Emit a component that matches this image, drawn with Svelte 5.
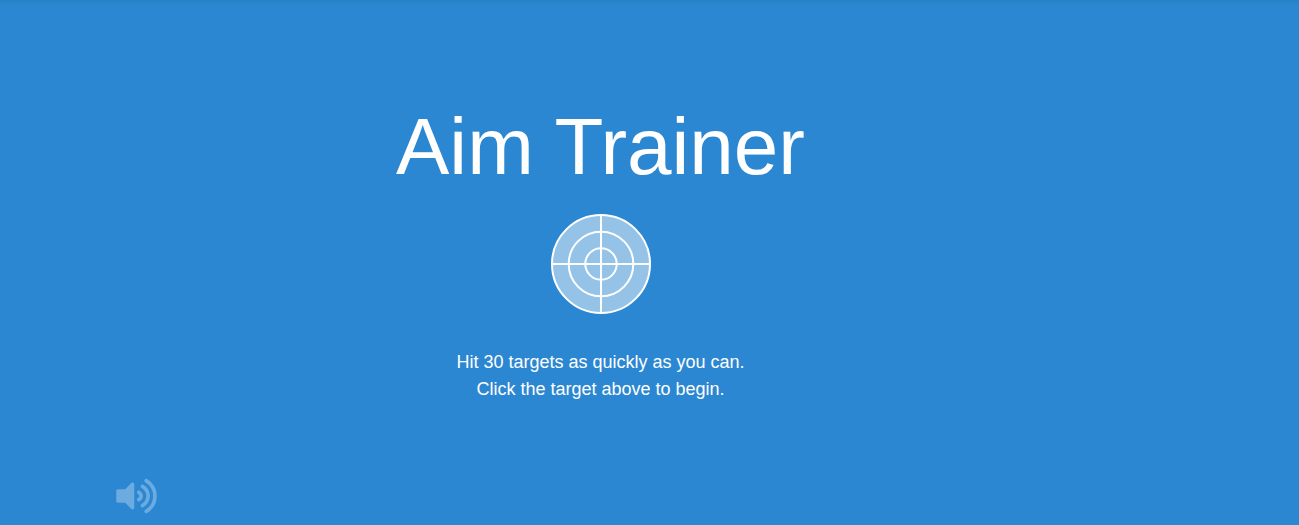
<script>
  let { total = 30 } = $props();
  let muted = $state(false);
</script>

<main>
  <div class="content">
    <h1>Aim Trainer</h1>
    <button class="target" type="button" aria-label="Start">
      <svg width="100" height="100" viewBox="0 0 100 100" fill="none" stroke="#fff" stroke-width="2">
        <circle cx="50" cy="50" r="49" fill="#fff" fill-opacity="0.5" />
        <circle cx="50" cy="50" r="32.3" />
        <circle cx="50" cy="50" r="15.7" />
        <path d="M50 0V100M0 50H100" />
      </svg>
    </button>
    <p>Hit {total} targets as quickly as you can.<br />Click the target above to begin.</p>
    <button
      class="sound"
      type="button"
      aria-label="Sound"
      aria-pressed={!muted}
      onclick={() => (muted = !muted)}
    >
      <svg width="41" height="36" viewBox="0 0 576 512">
        <path
          fill="#fff"
          d="M256 88v336c0 21.400-25.900 32-41 17L126 352H24c-13.300 0-24-10.700-24-24V184c0-13.300 10.700-24 24-24h102l89-89c15-15 41-4.500 41 17z"
        />
        <g fill="none" stroke="#fff" stroke-width="52" stroke-linecap="round">
          <path d="M320 203C364 226 364 286 320 309" />
          <path d="M372 120C480 183 480 329 372 392" />
          <path d="M426 37C592 141 592 371 426 475" />
        </g>
      </svg>
    </button>
  </div>
</main>

<style>
  :global(body) {
    margin: 0;
    background: #2b87d1;
  }

  main {
    box-sizing: border-box;
    min-height: 100vh;
    padding: 101px 98px 0 0;
    background: #2b87d1;
    box-shadow: inset 0 4px 4px -2px rgb(0 0 0 / 5%);
    color: #fff;
    font-family: "Liberation Sans", Arial, sans-serif;
  }

  .content {
    display: flex;
    flex-direction: column;
    align-items: center;
    max-width: 970px;
    margin: 0 auto;
    text-align: center;
  }

  h1 {
    margin: 0 0 21px;
    font-size: 80px;
    font-weight: 400;
    line-height: 92px;
  }

  button {
    padding: 0;
    border: 0;
    background: none;
    cursor: pointer;
  }

  svg {
    display: block;
  }

  .target {
    border-radius: 50%;
  }

  p {
    margin: 35px 0 75px;
    font-size: 18px;
    line-height: 27px;
  }

  .sound {
    align-self: flex-start;
    opacity: 0.3;
  }
</style>
